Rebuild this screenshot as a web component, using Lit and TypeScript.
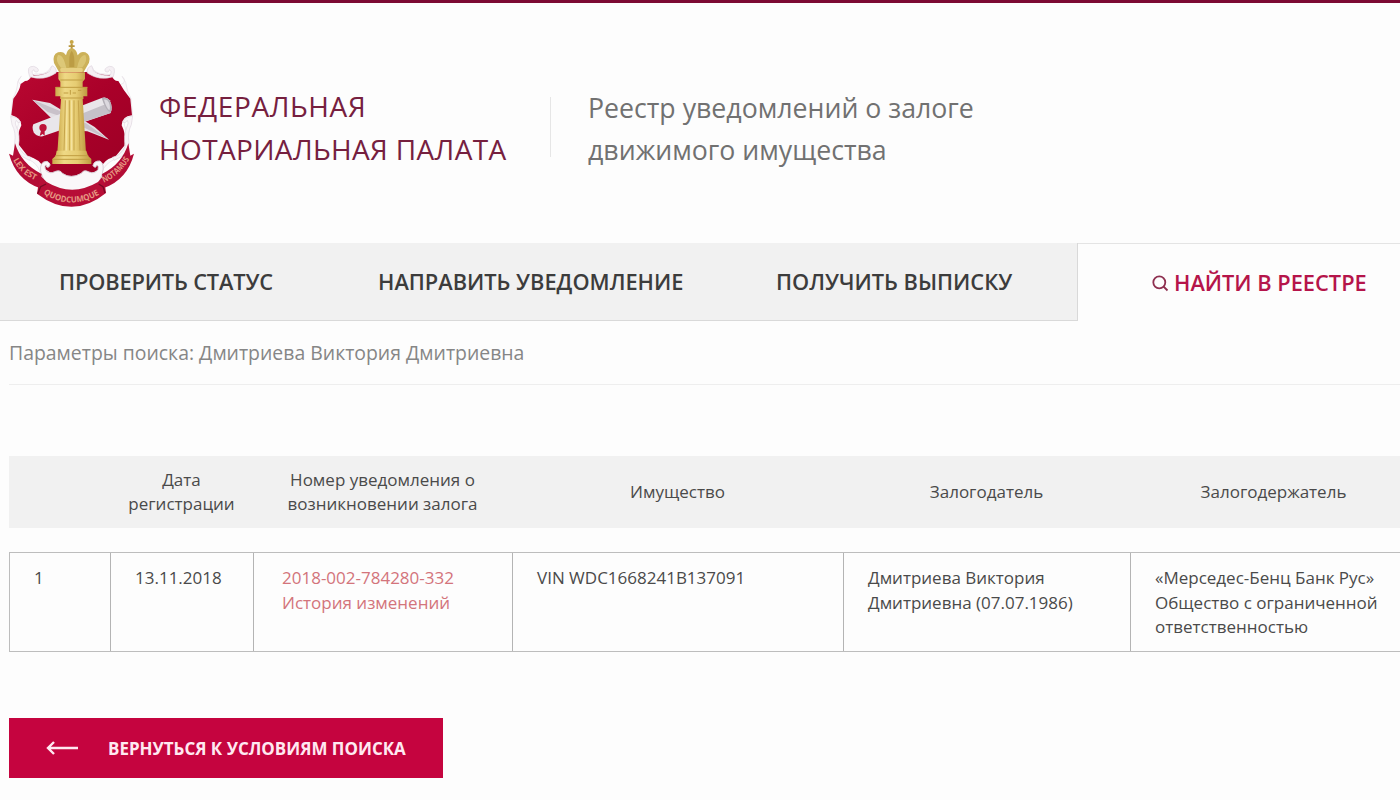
import { LitElement, html, svg, css } from 'lit';
import { customElement, property } from 'lit/decorators.js';

interface Pledge {
  date: string;
  number: string;
  property: string;
  pledgor: string[];
  pledgee: string[];
}

@customElement('chamber-crest')
export class ChamberCrest extends LitElement {
  static styles = css`
    :host {
      display: block;
      width: 145px;
      height: 190px;
    }
    svg {
      display: block;
      width: 100%;
      height: 100%;
    }
    .motto {
      font-family: 'Open Sans', sans-serif;
      font-size: 25px;
      font-weight: 700;
      fill: #e79a83;
    }
  `;

  private scroll() {
    return svg`
      <g>
        <path d="M97 209 L150 219 L196 247 L236 262 L284 291 L327 329 L262 304 L190 300 Z" fill="#e4dfe4" />
        <path d="M97 209 L143 246 L190 262 L236 285 L327 329 L258 280 L188 246 Z" fill="#c9c1c9" />
        <path d="M100 283 L305 204 Q319 199 329 211 Q339 232 332 249 L128 319 Q109 321 101 307 Q95 292 100 283 Z" fill="#e9e6ea" />
        <path d="M230 257 L318 222 Q328 228 332 249 L238 280 Z" fill="#c5c1c8" />
        <path d="M305 204 Q319 199 329 211 Q339 232 332 249 Q316 240 305 204 Z" fill="#b3afb7" />
        <path d="M312 209 Q322 207 327 218 Q332 232 328 241 Q318 232 312 209 Z" fill="#dcd9df" />
        <circle cx="129" cy="293" r="11" fill="#bd1338" />
        <path d="M123 302 L119 318 L128 312 L134 317 L134 302 Z" fill="#bd1338" />
      </g>
    `;
  }

  private column() {
    return svg`
      <g>
        <circle cx="215" cy="36" r="6" fill="#c7a646" />
        <path d="M212 42 H218 V58 H212 Z M206 46 H224 V51 H206 Z" fill="#b9973e" />
        <path d="M177 126 L162 99 Q156 74 174 67 Q190 62 198 76 Q202 56 215 55 Q229 56 233 76 Q242 62 256 67 Q274 75 267 98 L251 126 Z" fill="#ccb159" />
        <path d="M174 75 Q188 74 195 100 L199 114 L183 113 Q164 92 174 75 Z" fill="#ddc878" />
        <path d="M215 62 Q206 72 208 111 L223 111 Q225 72 215 62 Z" fill="#bc9c44" />
        <path d="M256 75 Q242 75 235 98 L231 114 L247 112 Q264 92 256 75 Z" fill="#dac472" />
        <rect x="181" y="114" width="67" height="12" rx="4" fill="#e7d082" />
        <path d="M175 127 H255 V147 L248 155 V171 H262 V199 H250 V207 H181 V199 H166 V171 H181 V155 L175 147 Z" fill="url(#gold)" />
        <path d="M183 207 H248 L258 368 H172 Z" fill="url(#gold)" />
        <path d="M196 211 L192 362 M208 211 V362 M222 211 V362 M235 211 L240 362" stroke="#c6a44b" stroke-width="3" fill="none" />
        <path d="M201 211 L199 362 M215 211 V362" stroke="#f5e3a0" stroke-width="4" fill="none" />
        <path d="M181 150 H249 M167 172 H262 M181 204 H250" stroke="#c09d42" stroke-width="3" />
        <path d="M191 189 H205 M211 180 V194 M218 189 H228 M234 181 H244" stroke="#c09d42" stroke-width="3" />
        <path d="M170 362 H259 L264 377 L274 387 V402 H157 V387 L167 377 Z" fill="url(#gold)" />
        <path d="M166 377 H265 M158 388 H273" stroke="#c09d42" stroke-width="3" />
      </g>
    `;
  }

  render() {
    return html`
      <svg viewBox="0 0 435 570" aria-hidden="true">
        <defs>
          <linearGradient id="gold">
            <stop offset="0" stop-color="#cdab4c" />
            <stop offset="0.3" stop-color="#efd985" />
            <stop offset="0.65" stop-color="#e6cc72" />
            <stop offset="1" stop-color="#be9a40" />
          </linearGradient>
          <linearGradient id="field" x1="0" y1="0" x2="1" y2="1">
            <stop offset="0" stop-color="#b90831" />
            <stop offset="0.5" stop-color="#a90029" />
            <stop offset="1" stop-color="#9c0025" />
          </linearGradient>
        </defs>
        <path
          d="M64 139 Q51 149 58 160 Q75 171 88 149 Q91 129 116 132 Q143 133 153 110 Q167 112 169 127 H260 Q263 111 275 109 Q285 133 313 132 Q337 132 341 149 Q351 171 370 160 Q378 148 366 139 L377 157 Q380 184 393 206 L398 258 Q373 263 373 285 Q387 319 381 346 L343 388 Q313 403 306 426 L273 449 Q216 470 158 447 L120 426 Q112 399 85 388 L51 348 Q41 317 55 284 Q55 264 33 260 L38 206 Q52 184 53 155 Z"
          fill="#fbf8fa" stroke="#e6dee5" stroke-width="2"
        />
        <path
          d="M75 153 Q89 153 96 134 Q125 139 148 126 H281 Q307 139 334 134 Q341 154 355 153 Q371 182 391 206 L396 256 Q365 259 365 286 Q380 315 373 347 L347 379 Q307 391 303 416 L276 429 Q214 451 155 430 L130 414 Q120 387 83 378 L57 345 Q49 315 64 286 Q63 263 34 255 L40 206 Q59 183 62 162 Z"
          fill="url(#field)"
        />
        <path
          d="M89 140 Q77 107 101 109 Q121 116 113 125 Q103 129 102 119 Q91 123 101 137 Q128 138 149 124 L156 107 Q171 112 168 129 Q132 154 89 140 M340 140 Q351 107 328 109 Q309 116 317 125 Q327 129 328 119 Q338 123 329 137 Q302 138 281 124 L275 107 Q260 112 262 129 Q298 154 340 140"
          fill="#f5f0f4" stroke="#e0d6df" stroke-width="2"
        />
        <path
          d="M32 260 Q54 259 62 277 Q53 281 49 271 Q43 279 48 287 Q62 317 55 347 Q67 377 94 382 L88 391 Q42 371 44 339 Q49 307 36 284 Z M398 258 Q377 259 368 277 Q377 281 382 271 Q387 279 382 287 Q369 317 376 347 Q365 377 337 382 L343 391 Q389 371 387 339 Q382 307 394 284 Z"
          fill="#f8f4f7" stroke="#e0d6df" stroke-width="2"
        />
        <path
          d="M122 425 Q118 394 141 394 Q157 403 145 412 Q138 413 139 405 Q131 406 138 422 Q150 433 164 425 Q181 418 187 430 Q213 448 244 430 Q251 417 267 426 Q284 433 294 419 Q297 404 289 407 Q287 417 279 407 Q281 392 300 393 Q315 402 307 430 L293 470 Q216 501 139 470 Z"
          fill="#faf7f9" stroke="#dacfd8" stroke-width="3"
        />
        ${this.scroll()} ${this.column()}
        <path d="M45 340 Q64 402 125 432 L119 474 Q48 449 27 371 L39 377 Z" fill="#b30d36" />
        <path d="M385 340 Q367 402 306 432 L311 474 Q382 449 402 371 L391 377 Z" fill="#b30d36" />
        <path d="M120 436 L140 456 Q216 502 294 456 L311 436 L318 489 Q217 571 111 491 Z" fill="#b70e37" />
        <path d="M113 491 L122 470 L138 462 M315 489 L309 470 L296 462" stroke="#790824" stroke-width="4" fill="none" />
        <path id="ribbon-left" d="M39 390 Q62 437 122 457" fill="none" />
        <path id="ribbon-bottom" d="M130 491 Q216 545 306 489" fill="none" />
        <path id="ribbon-right" d="M312 458 Q363 435 394 377" fill="none" />
        <text class="motto"><textPath href="#ribbon-left" textLength="92" lengthAdjust="spacingAndGlyphs">LEX EST</textPath></text>
        <text class="motto"><textPath href="#ribbon-bottom" textLength="178" lengthAdjust="spacingAndGlyphs">QUODCUMQUE</textPath></text>
        <text class="motto"><textPath href="#ribbon-right" textLength="106" lengthAdjust="spacingAndGlyphs">NOTAMUS</textPath></text>
      </svg>
    `;
  }
}

@customElement('app-root')
export class AppRoot extends LitElement {
  static styles = css`
    :host {
      display: block;
      height: 800px;
      overflow: hidden;
      box-sizing: border-box;
      border-top: 3px solid #7c0a33;
      background: #fdfdfd;
      color: #4a4a4a;
      font-family: 'Open Sans', sans-serif;
    }
    a {
      color: inherit;
      text-decoration: none;
    }
    .header {
      display: flex;
      align-items: flex-start;
      height: 240px;
    }
    .crest {
      margin-top: 27px;
    }
    .brand {
      width: 391px;
      margin: 82px 0 0 14px;
      color: #76203f;
      font-size: 28px;
      letter-spacing: 0.36px;
      line-height: 43px;
      white-space: nowrap;
    }
    .brand-top {
      letter-spacing: 0.6px;
    }
    .title {
      margin-top: 94px;
      padding-left: 37px;
      border-left: 1px solid #e6e6e6;
      height: 60px;
      color: #717171;
      font-size: 26.7px;
      line-height: 42px;
      white-space: nowrap;
    }
    .title-text {
      margin-top: -10px;
    }
    .nav {
      display: grid;
      grid-template-columns: 318px 399px 361px 1fr;
      height: 78px;
      font-size: 21.8px;
      font-weight: 600;
      line-height: 76px;
      white-space: nowrap;
      color: #3c3c3c;
    }
    .nav-item {
      padding: 1px 0 0 60px;
      border-bottom: 1px solid #d9d9d9;
      background: #f1f1f1;
    }
    .nav-item:first-child {
      padding-left: 59px;
      letter-spacing: -0.15px;
    }
    .nav-item:nth-child(3) {
      padding-left: 59px;
      border-right: 1px solid #d9d9d9;
    }
    .nav-active {
      display: flex;
      align-items: center;
      gap: 5px;
      padding-left: 74px;
      border-top: 1px solid #e4e4e4;
      color: #b5144a;
    }
    .search-icon {
      width: 17px;
      height: 17px;
      margin-top: 2px;
    }
    .params {
      height: 64px;
      box-sizing: border-box;
      margin-left: 9px;
      border-bottom: 1px solid #eeeeee;
      color: #868686;
      font-size: 19.43px;
      line-height: 64px;
    }
    .table {
      width: 1408px;
      margin: 71px 0 0 9px;
      font-size: 17px;
      line-height: 24.5px;
    }
    .row {
      display: grid;
      grid-template-columns: 101px 143px 259px 331px 287px 287px;
    }
    .head {
      height: 72px;
      align-items: center;
      background: #f1f1f1;
      line-height: 24px;
      text-align: center;
      white-space: pre-line;
    }
    .body {
      height: 100px;
      margin-top: 24px;
      box-sizing: border-box;
      border: 1px solid #bdbdbd;
      border-right: none;
    }
    .cell {
      padding: 13px 0 0 24px;
      border-right: 1px solid #b4b4b4;
      white-space: nowrap;
    }
    .link {
      padding-left: 28px;
      color: #d3747b;
    }
    .back {
      display: inline-flex;
      align-items: center;
      gap: 30px;
      width: 434px;
      height: 60px;
      margin: 66px 0 0 9px;
      padding-left: 37px;
      box-sizing: border-box;
      background: #c5043f;
      color: #ffe9f1;
      font-size: 16.97px;
      font-weight: 700;
      white-space: nowrap;
    }
    .arrow {
      width: 32px;
      height: 16px;
    }
  `;

  @property({ type: Array })
  columns: string[] = [
    '',
    'Дата\nрегистрации',
    'Номер уведомления о\nвозникновении залога',
    'Имущество',
    'Залогодатель',
    'Залогодержатель',
  ];

  @property({ type: Array })
  pledges: Pledge[] = [
    {
      date: '13.11.2018',
      number: '2018-002-784280-332',
      property: 'VIN WDC1668241B137091',
      pledgor: ['Дмитриева Виктория', 'Дмитриевна (07.07.1986)'],
      pledgee: ['«Мерседес-Бенц Банк Рус»', 'Общество с ограниченной', 'ответственностью'],
    },
  ];

  private renderLines(lines: string[]) {
    return lines.map((line) => html`<div>${line}</div>`);
  }

  render() {
    return html`
      <header class="header">
        <chamber-crest class="crest"></chamber-crest>
        <div class="brand">
          <div class="brand-top">ФЕДЕРАЛЬНАЯ</div>
          <div>НОТАРИАЛЬНАЯ ПАЛАТА</div>
        </div>
        <div class="title">
          <div class="title-text">
            <div>Реестр уведомлений о залоге</div>
            <div>движимого имущества</div>
          </div>
        </div>
      </header>
      <nav class="nav">
        <a class="nav-item">ПРОВЕРИТЬ СТАТУС</a>
        <a class="nav-item">НАПРАВИТЬ УВЕДОМЛЕНИЕ</a>
        <a class="nav-item">ПОЛУЧИТЬ ВЫПИСКУ</a>
        <a class="nav-active">
          <svg class="search-icon" viewBox="0 0 17 17" fill="none" stroke="#8e3050" stroke-width="1.8">
            <circle cx="7.3" cy="7.3" r="6" />
            <path d="M11.5 11.5 L15.5 15.5" />
          </svg>
          <span>НАЙТИ В РЕЕСТРЕ</span>
        </a>
      </nav>
      <div class="params">Параметры поиска: Дмитриева Виктория Дмитриевна</div>
      <div class="table">
        <div class="row head">${this.columns.map((title) => html`<div>${title}</div>`)}</div>
        ${this.pledges.map(
          (item, index) => html`
            <div class="row body">
              <div class="cell">${index + 1}</div>
              <div class="cell">${item.date}</div>
              <div class="cell link">
                <div><a>${item.number}</a></div>
                <div><a>История изменений</a></div>
              </div>
              <div class="cell">${item.property}</div>
              <div class="cell">${this.renderLines(item.pledgor)}</div>
              <div class="cell">${this.renderLines(item.pledgee)}</div>
            </div>
          `
        )}
      </div>
      <a class="back">
        <svg class="arrow" viewBox="0 0 32 16" fill="none" stroke="#ffe9f1" stroke-width="2.4">
          <path d="M32 8 H2 M8 2 L2 8 L8 14" />
        </svg>
        <span>ВЕРНУТЬСЯ К УСЛОВИЯМ ПОИСКА</span>
      </a>
    `;
  }
}

declare global {
  interface HTMLElementTagNameMap {
    'app-root': AppRoot;
    'chamber-crest': ChamberCrest;
  }
}
